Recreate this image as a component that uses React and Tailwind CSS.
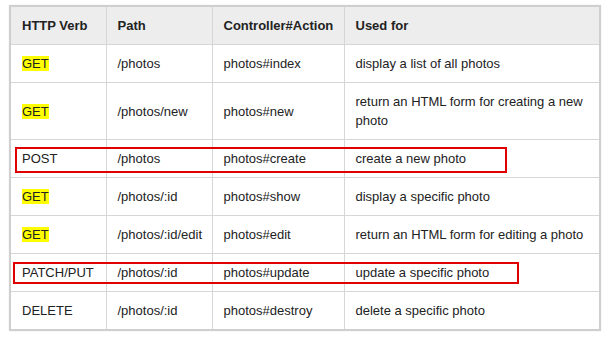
import React from 'react';

const rows = [
  { verb: 'GET', hl: true, path: '/photos', action: 'photos#index', used: 'display a list of all photos' },
  { verb: 'GET', hl: true, path: '/photos/new', action: 'photos#new', used: 'return an HTML form for creating a new photo' },
  { verb: 'POST', path: '/photos', action: 'photos#create', used: 'create a new photo' },
  { verb: 'GET', hl: true, path: '/photos/:id', action: 'photos#show', used: 'display a specific photo' },
  { verb: 'GET', hl: true, path: '/photos/:id/edit', action: 'photos#edit', used: 'return an HTML form for editing a photo' },
  { verb: 'PATCH/PUT', path: '/photos/:id', action: 'photos#update', used: 'update a specific photo' },
  { verb: 'DELETE', path: '/photos/:id', action: 'photos#destroy', used: 'delete a specific photo' },
];

const cell = 'border border-[#d6d6d6] px-[11px] py-[9px] leading-[19px] text-left align-middle';

export default function App() {
  return (
    <div className="w-[611px] h-[340px] bg-white pl-[9px] pt-[5px] font-['Liberation_Sans',Arial,sans-serif] text-[13px] text-[#222]">
      <div className="relative w-[592px]">
        <table className="w-[592px] table-fixed border-collapse border-2 border-[#cfcfcf] shadow-[0_0_1px_rgba(0,0,0,0.15)]">
          <colgroup>
            <col className="w-[96px]" />
            <col className="w-[106px]" />
            <col className="w-[132px]" />
            <col />
          </colgroup>
          <thead>
            <tr className="bg-[#ededed]">
              <th className={`${cell} font-bold`}>HTTP Verb</th>
              <th className={`${cell} font-bold`}>Path</th>
              <th className={`${cell} font-bold`}>Controller#Action</th>
              <th className={`${cell} font-bold`}>Used for</th>
            </tr>
          </thead>
          <tbody>
            {rows.map((r, i) => (
              <tr key={i}>
                <td className={cell}>
                  {r.hl ? <span className="bg-[#ffff00]">{r.verb}</span> : r.verb}
                </td>
                <td className={cell}>{r.path}</td>
                <td className={cell}>{r.action}</td>
                <td className={cell}>{r.used}</td>
              </tr>
            ))}
          </tbody>
        </table>

        {/* red annotation boxes */}
        <div className="absolute left-[6px] top-[142px] w-[492px] h-[26px] border-2 border-[#e00000] pointer-events-none" />
        <div className="absolute left-[4px] top-[257px] w-[506px] h-[22px] border-2 border-[#e00000] pointer-events-none" />
      </div>
    </div>
  );
}
